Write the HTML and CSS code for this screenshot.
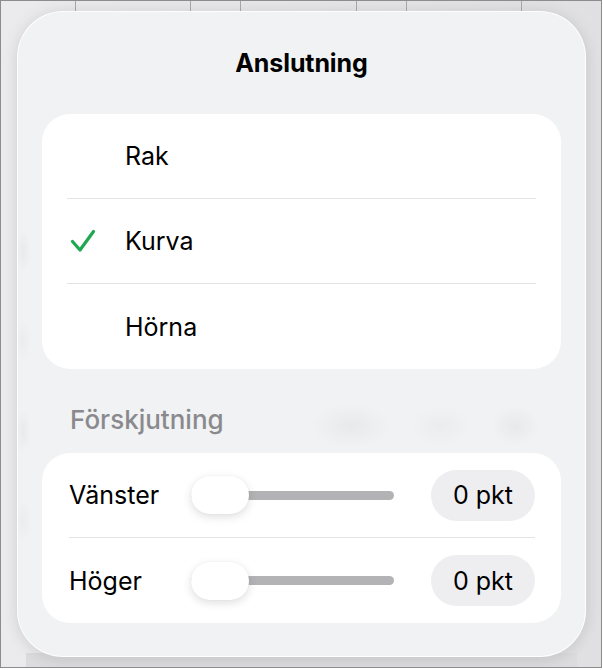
FILE: index.html
```html
<!DOCTYPE html>
<html lang="sv">
<head>
<meta charset="utf-8">
<title>Anslutning</title>
<link rel="stylesheet" href="styles.css">
</head>
<body>
<div class="frame">
  <div class="sheet-lines">
    <span style="left:74px"></span>
    <span style="left:189px"></span>
    <span style="left:239px"></span>
    <span style="left:355px"></span>
    <span style="left:405px"></span>
    <span style="left:520px"></span>
  </div>
  <div class="sheet-bottom"></div>

  <div class="popover">
    <h1 class="title">Anslutning</h1>

    <ul class="card options">
      <li class="option"><span class="mark"></span><span class="label">Rak</span></li>
      <li class="option selected">
        <span class="mark">
          <svg width="26" height="24" viewBox="0 0 26 24"><path d="M2.5 12.5 L10 21 L23.5 2.5" fill="none" stroke="#1ea852" stroke-width="3.2" stroke-linecap="round" stroke-linejoin="round"/></svg>
        </span>
        <span class="label">Kurva</span>
      </li>
      <li class="option"><span class="mark"></span><span class="label">Hörna</span></li>
    </ul>

    <h2 class="section">Förskjutning</h2>

    <div class="card offsets">
      <div class="offset-row">
        <span class="offset-label">Vänster</span>
        <div class="slider"><div class="track"></div><div class="thumb"></div></div>
        <span class="pill">0 pkt</span>
      </div>
      <div class="offset-row">
        <span class="offset-label">Höger</span>
        <div class="slider"><div class="track"></div><div class="thumb"></div></div>
        <span class="pill">0 pkt</span>
      </div>
    </div>
  </div>
</div>
</body>
</html>
```

FILE: styles.css
```css
* { box-sizing: border-box; }

html, body {
  margin: 0;
  padding: 0;
  background: #ffffff;
}

body {
  font-family: Inter, "Noto Sans", "Liberation Sans", sans-serif;
  color: #000;
}

.frame {
  position: relative;
  width: 602px;
  height: 668px;
  border: 1px solid #8c8c8c;
  background: linear-gradient(90deg, #ebebed 0%, #e6e6e8 50%, #e0e0e2 100%);
  padding: 10px 0 0 16px;
  overflow: hidden;
}

/* spreadsheet grid peeking out above the popover */
.sheet-lines span {
  position: absolute;
  top: 0;
  width: 1px;
  height: 12px;
  background: #a9a9ab;
}

.sheet-bottom {
  position: absolute;
  left: 25px;
  right: 24px;
  bottom: 0;
  height: 14px;
  background: #dcdcde;
}

/* frosted panel: faint smudges of the sheet show through the material */
.popover {
  position: relative;
  width: 569px;
  height: 646px;
  border-radius: 46px;
  background:
    radial-gradient(ellipse 40px 22px at 333px 414px, rgba(0, 0, 0, 0.035), transparent),
    radial-gradient(ellipse 30px 20px at 423px 414px, rgba(0, 0, 0, 0.025), transparent),
    radial-gradient(ellipse 24px 20px at 497px 414px, rgba(0, 0, 0, 0.035), transparent),
    radial-gradient(ellipse 8px 22px at 5px 239px, rgba(0, 0, 0, 0.03), transparent),
    radial-gradient(ellipse 8px 22px at 5px 329px, rgba(0, 0, 0, 0.025), transparent),
    radial-gradient(ellipse 8px 22px at 5px 419px, rgba(0, 0, 0, 0.03), transparent),
    radial-gradient(ellipse 8px 22px at 5px 509px, rgba(0, 0, 0, 0.025), transparent),
    #f1f2f3;
  border: 1px solid rgba(255, 255, 255, 0.9);
  box-shadow: 0 0 18px rgba(0, 0, 0, 0.07), 0 4px 14px rgba(0, 0, 0, 0.05);
  padding: 37px 24px 0;
}

.title {
  margin: 0;
  text-align: center;
  font-size: 25px;
  font-weight: 700;
  line-height: 28px;
  letter-spacing: -0.1px;
}

.card {
  background: #ffffff;
  border-radius: 28px;
  margin: 0;
  padding: 0;
  list-style: none;
}

.options {
  margin-top: 37px;
  padding: 0 25px;
}

.option {
  display: flex;
  align-items: center;
  height: 85px;
  border-bottom: 1px solid #e3e3e5;
}

.option:last-child {
  border-bottom: none;
}

.mark {
  width: 58px;
  display: flex;
  align-items: center;
  padding-left: 3px;
}

.mark svg { display: block; }

.label,
.offset-label,
.pill {
  font-size: 25px;
  font-weight: 400;
  line-height: 30px;
}

.section {
  margin: 37px 0 19px 28px;
  font-size: 26px;
  font-weight: 500;
  line-height: 28px;
  color: #8a8a8e;
}

.offsets {
  padding: 0 26px 0 27px;
}

.offset-row {
  display: flex;
  align-items: center;
  height: 85px;
  border-bottom: 1px solid #e3e3e5;
}

.offset-row:last-child {
  border-bottom: none;
}

.offset-label {
  width: 122px;
}

.slider {
  position: relative;
  width: 203px;
  height: 38px;
  display: flex;
  align-items: center;
}

.track {
  width: 100%;
  height: 9px;
  border-radius: 5px;
  background: #b3b3b5;
}

.thumb {
  position: absolute;
  left: 0;
  top: 0;
  width: 58px;
  height: 38px;
  border-radius: 19px;
  background: #ffffff;
  box-shadow: 0 3px 10px rgba(0, 0, 0, 0.13), 0 0 2px rgba(0, 0, 0, 0.05);
}

.pill {
  margin-left: auto;
  width: 104px;
  height: 51px;
  border-radius: 26px;
  background: #eeeef0;
  display: flex;
  align-items: center;
  justify-content: center;
}
```
